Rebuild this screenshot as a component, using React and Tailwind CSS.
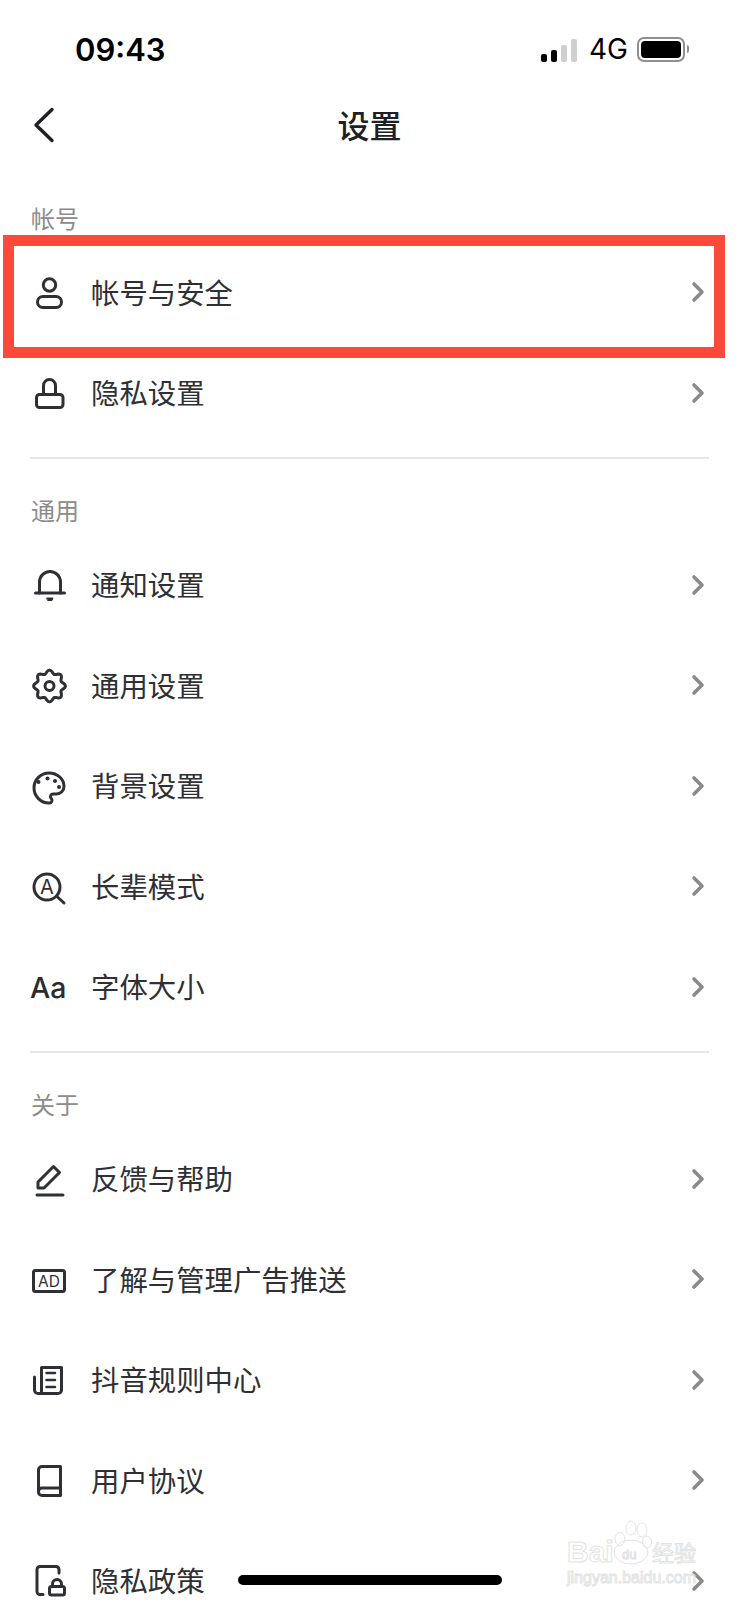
import React from "react";

// 8-lobed gear outline, centred on 19.5,20 in a 40 box
const gearPath = (() => {
  const pts = [];
  for (let i = 0; i < 96; i++) {
    const t = (i / 96) * Math.PI * 2;
    const r = 14.2 + 1.7 * Math.cos(8 * t);
    pts.push(`${(19.5 + r * Math.cos(t)).toFixed(2)} ${(20 + r * Math.sin(t)).toFixed(2)}`);
  }
  return `M${pts.join("L")}Z`;
})();

const Icon = ({ children }) => (
  <svg
    viewBox="0 0 40 40"
    fill="none"
    stroke="#2f3036"
    strokeWidth="3"
    strokeLinecap="round"
    strokeLinejoin="round"
    className="mt-[2px] h-10 w-10 shrink-0"
  >
    {children}
  </svg>
);

const icons = {
  user: (
    <Icon>
      <circle cx="19.5" cy="12" r="6.2" />
      <rect x="7.5" y="23.5" width="24" height="11" rx="5.5" />
    </Icon>
  ),
  lock: (
    <Icon>
      <path d="M13.5 20V11.5a6 6 0 0 1 12 0V20" />
      <rect x="6.5" y="20.5" width="26.5" height="13" rx="3" />
    </Icon>
  ),
  bell: (
    <Icon>
      <path d="M9.5 27V16a10.5 10.5 0 0 1 21 0v11" />
      <path d="M5.5 27H34.5" />
      <path d="M17 32h6l-1 2.5h-4z" fill="#2f3036" strokeWidth="1" />
    </Icon>
  ),
  gear: (
    <Icon>
      <path d={gearPath} />
      <circle cx="19.5" cy="20" r="4.5" />
    </Icon>
  ),
  palette: (
    <Icon>
      <g transform="translate(1 3) scale(1.5)" strokeWidth="2">
        <path d="M12 22a1 1 0 0 1 0-20 10 9 0 0 1 10 9 5 5 0 0 1-5 5h-2.25a1.75 1.75 0 0 0-1.4 2.8l.3.4a1.75 1.75 0 0 1-1.4 2.8z" />
      </g>
      <g fill="#2f3036" stroke="none">
        <circle cx="8.5" cy="15" r="2" />
        <circle cx="17.5" cy="11.5" r="2" />
        <circle cx="25" cy="14" r="2" />
        <circle cx="29" cy="20" r="2" />
      </g>
    </Icon>
  ),
  elder: (
    <Icon>
      <circle cx="17" cy="20" r="13" />
      <path d="M27.5 30L34 36" />
      <text
        x="17"
        y="27"
        fontSize="20"
        textAnchor="middle"
        fill="#2f3036"
        stroke="none"
        className="font-['Inter',sans-serif]"
      >
        A
      </text>
    </Icon>
  ),
  pen: (
    <Icon>
      <path d="M8 28v-6L23.5 6.5l6 6L14 28z" />
      <path d="M7 35H33" />
    </Icon>
  ),
  ad: (
    <Icon>
      <rect x="3.5" y="10.5" width="31" height="21" rx="2" />
      <text
        x="19"
        y="26.5"
        fontSize="15.5"
        textAnchor="middle"
        fill="#2f3036"
        stroke="none"
        className="font-['Inter',sans-serif]"
      >
        AD
      </text>
    </Icon>
  ),
  rules: (
    <Icon>
      <path d="M11.5 32.5V6.5h20V29a3.5 3.5 0 0 1-3.5 3.5H8A3.5 3.5 0 0 1 4.5 29V16" />
      <path d="M16.5 12H25M16.5 19H25M16.5 26H25" strokeWidth="2.5" />
    </Icon>
  ),
  book: (
    <Icon>
      <path d="M12 5.5h18.5v29H12A3.5 3.5 0 0 1 8.5 31V9A3.5 3.5 0 0 1 12 5.5z" />
      <path d="M8.5 30.5A3.5 3.5 0 0 1 12 27h18.5" />
    </Icon>
  ),
  policy: (
    <Icon>
      <path d="M13 32.5H10a3 3 0 0 1-3-3v-22a3 3 0 0 1 3-3h16a3 3 0 0 1 3 3V11" />
      <path d="M22.5 24v-2a4.5 4.5 0 0 1 9 0v2" />
      <rect x="19.5" y="24.5" width="15" height="8.5" rx="2" />
    </Icon>
  ),
  aa: (
    <span className="mt-[2px] w-10 shrink-0 font-['Inter',sans-serif] text-[28.5px] font-medium leading-none text-[#2a2b30]">
      Aa
    </span>
  ),
};

const Chevron = () => (
  <svg
    viewBox="0 0 14 22"
    fill="none"
    stroke="#8a8a8a"
    strokeWidth="3.6"
    strokeLinecap="round"
    strokeLinejoin="round"
    className="h-[22px] w-[14px] shrink-0"
  >
    <path d="M3 3l8 8-8 8" />
  </svg>
);

const Row = ({ icon, label, highlight }) => (
  <div className="relative flex h-[100.5px] items-center pl-[30px] pr-[34px]">
    {icons[icon]}
    <span className="ml-[21px] flex-1 pb-[1px] text-[28.4px] leading-none text-[#2f3036]">
      {label}
    </span>
    <Chevron />
    {highlight && (
      <div className="absolute bottom-[-15px] left-[3px] right-[14px] top-[-7px] border-[11px] border-[#fb4a3c]" />
    )}
  </div>
);

const SectionLabel = ({ children, className = "" }) => (
  <div className={`flex h-[46px] items-center pb-[3px] pl-[31px] text-[24px] leading-none text-[#8c8c8c] ${className}`}>
    {children}
  </div>
);

const Divider = () => <div className="mx-[30px] mt-[14px] h-[1.5px] bg-[#e6e6e6]" />;

const StatusBar = () => (
  <div className="flex h-[98px] items-center justify-between pl-[75px] pr-[50px] font-['Inter',sans-serif]">
    <span className="pt-[1px] text-[31px] font-semibold leading-none text-black">09:43</span>
    <div className="flex items-center">
      <div className="mt-[1px] flex h-[24px] items-end gap-[4px]">
        <div className="h-[8px] w-[6px] rounded-[2px] bg-black" />
        <div className="h-[12px] w-[6px] rounded-[2px] bg-black" />
        <div className="h-[17px] w-[6px] rounded-[2px] bg-[#cfcfcf]" />
        <div className="h-[23px] w-[6px] rounded-[2px] bg-[#cfcfcf]" />
      </div>
      <span className="ml-[12px] text-[28px] leading-none text-black">4G</span>
      <div className="ml-[9px] flex h-[25px] w-[48px] items-center justify-center rounded-[7px] border-2 border-[#8f8f8f]">
        <div className="h-[17px] w-[40px] rounded-[4px] bg-black" />
      </div>
      <div className="ml-[2px] h-[8px] w-[2px] rounded-r-full bg-[#8f8f8f]" />
    </div>
  </div>
);

const NavBar = () => (
  <div className="relative flex h-[54px] items-center justify-center pb-[3px]">
    <svg
      viewBox="0 0 22 36"
      fill="none"
      stroke="#1f2025"
      strokeWidth="3.4"
      strokeLinecap="round"
      strokeLinejoin="round"
      className="absolute left-[33px] top-[9px] h-[36px] w-[22px]"
    >
      <path d="M19 2.5L3 18l16 15.5" />
    </svg>
    <h1 className="text-[32px] font-medium leading-none text-[#1f2025]">设置</h1>
  </div>
);

const Watermark = () => (
  <svg
    viewBox="0 0 145 75"
    fill="none"
    className="absolute left-[560px] top-[1515px] h-[75px] w-[145px] font-['Liberation_Sans',sans-serif]"
  >
    <g stroke="#e3e3e3" strokeWidth="1">
      <text x="7" y="47" fontSize="30" fontWeight="700">Bai</text>
      <ellipse cx="71" cy="37" rx="17" ry="12" />
      <ellipse cx="60" cy="24" rx="5" ry="6.5" />
      <ellipse cx="71" cy="13" rx="5" ry="7" />
      <ellipse cx="82" cy="15" rx="5" ry="7" />
      <ellipse cx="87" cy="27" rx="4.5" ry="6" />
      <text x="62" y="44" fontSize="13">du</text>
      <text x="92" y="46" fontSize="22" className="font-['Noto_Sans_CJK_SC',sans-serif]">经验</text>
      <text x="7" y="68" fontSize="16">jingyan.baidu.com</text>
    </g>
  </svg>
);

export default function App() {
  return (
    <div className="relative h-[1600px] w-[739px] overflow-hidden bg-white font-['Noto_Sans_CJK_SC',sans-serif]">
      <StatusBar />
      <NavBar />

      <SectionLabel className="mt-[44px]">帐号</SectionLabel>
      <Row icon="user" label="帐号与安全" highlight />
      <Row icon="lock" label="隐私设置" />
      <Divider />

      <SectionLabel className="mt-[30px]">通用</SectionLabel>
      <Row icon="bell" label="通知设置" />
      <Row icon="gear" label="通用设置" />
      <Row icon="palette" label="背景设置" />
      <Row icon="elder" label="长辈模式" />
      <Row icon="aa" label="字体大小" />
      <Divider />

      <SectionLabel className="mt-[30px]">关于</SectionLabel>
      <Row icon="pen" label="反馈与帮助" />
      <Row icon="ad" label="了解与管理广告推送" />
      <Row icon="rules" label="抖音规则中心" />
      <Row icon="book" label="用户协议" />
      <Row icon="policy" label="隐私政策" />

      <Watermark />
      <div className="absolute left-[238px] top-[1575px] h-[10px] w-[264px] rounded-full bg-black" />
    </div>
  );
}
